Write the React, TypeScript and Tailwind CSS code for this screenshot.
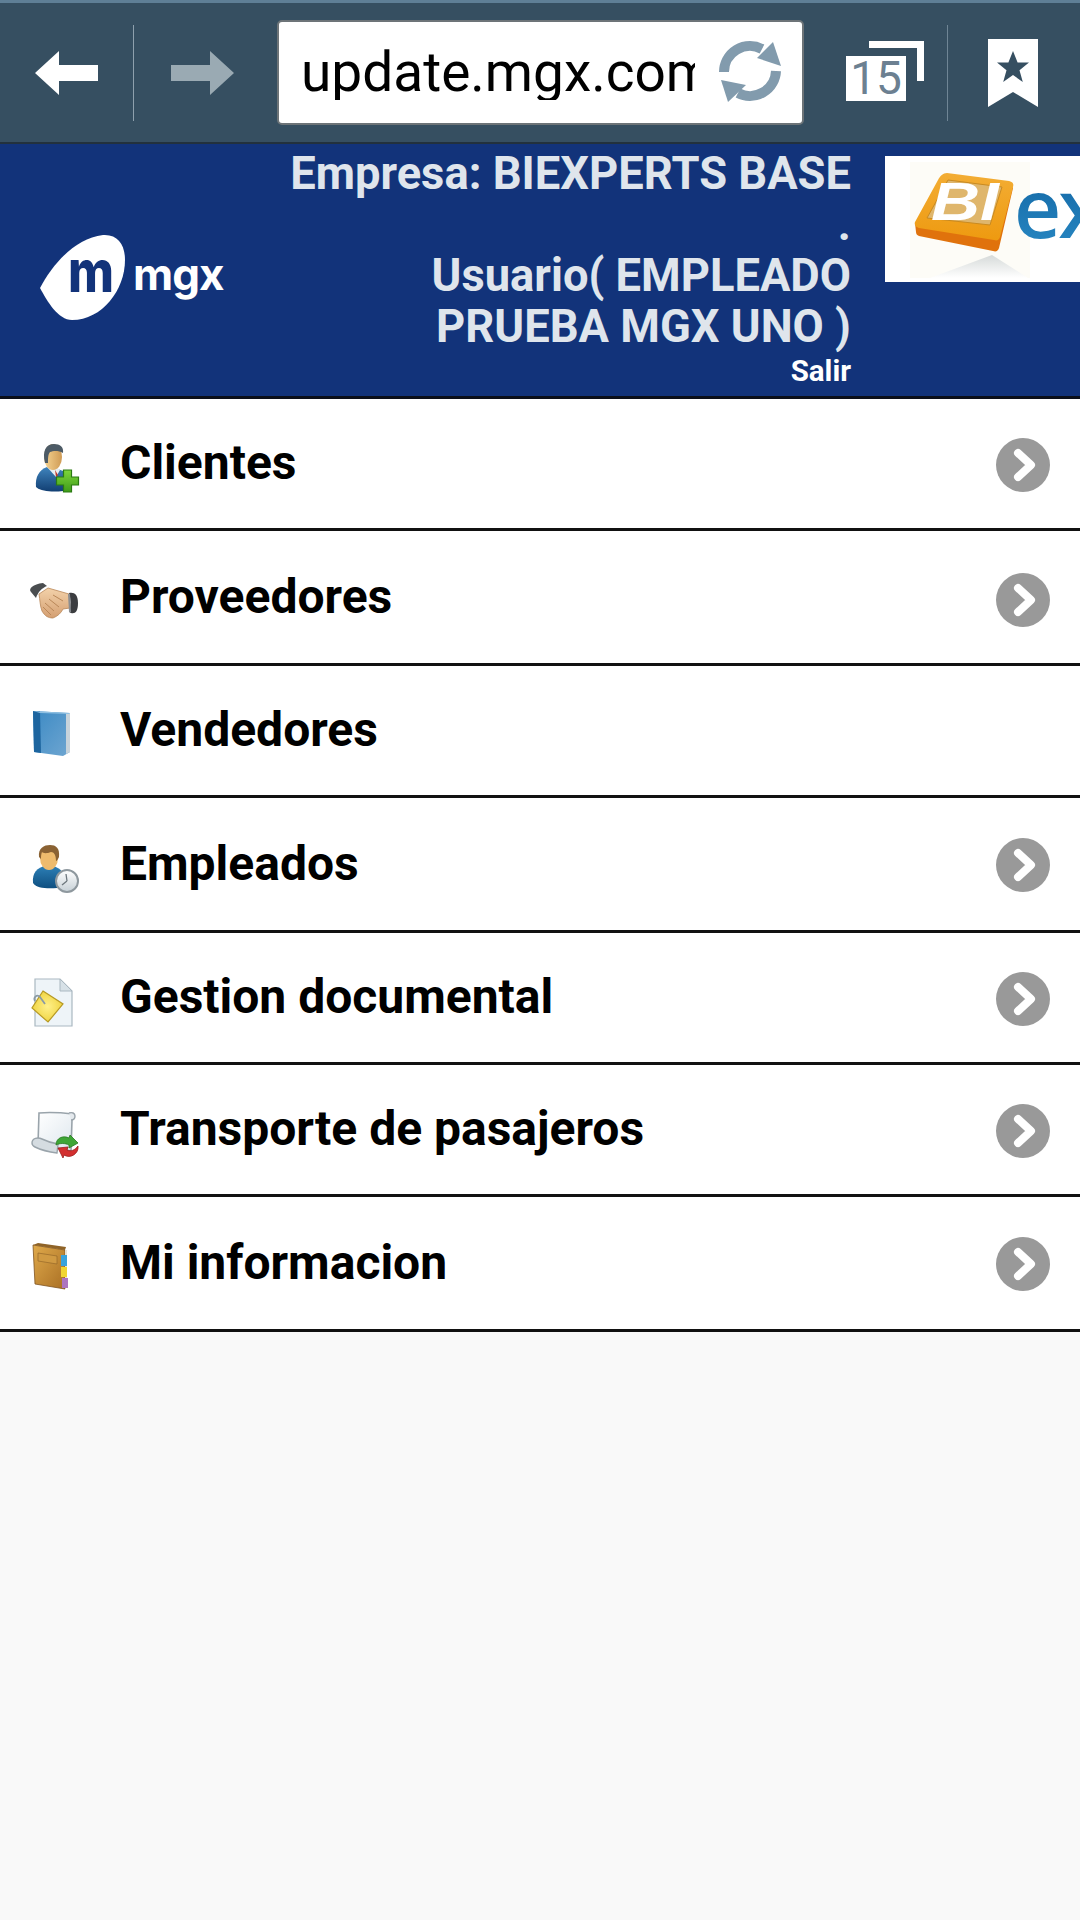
import type { ReactNode } from "react";

const font = { roboto: "font-['Roboto',sans-serif]" };

function ClientIcon() {
  return (
    <svg viewBox="0 0 50 50" className="h-[50px] w-[50px] overflow-visible">
      <defs>
        <linearGradient id="cl-suit" x1="0" y1="0" x2="0" y2="1">
          <stop offset="0" stopColor="#3f84bd" />
          <stop offset="1" stopColor="#123f73" />
        </linearGradient>
        <linearGradient id="cl-face" x1="0" y1="0" x2="1" y2="0">
          <stop offset="0" stopColor="#f6d492" />
          <stop offset="1" stopColor="#cf9b55" />
        </linearGradient>
        <linearGradient id="cl-plus" x1="0" y1="0" x2="0" y2="1">
          <stop offset="0" stopColor="#7ed63a" />
          <stop offset="1" stopColor="#3f9c1a" />
        </linearGradient>
      </defs>
      <path d="M6 48c-1-10 3-17 11-20l8 1 8 3v20c-9 1-21 1-27-4z" fill="url(#cl-suit)" />
      <path d="M17 28l9 10 4-7-5-4z" fill="#e8eef2" />
      <path d="M25 31l3 5-2 2z" fill="#c0392b" />
      <ellipse cx="23" cy="18" rx="9" ry="13" fill="url(#cl-face)" />
      <path d="M15 24c-3-12 1-19 9-19 6 0 10 3 9 9-5-3-10-2-13-1-2 2-2 7-2 11z" fill="#4d5b66" />
      <path d="M33.5 31h8v7h7v8h-7v7h-8v-7h-7v-8h7z" fill="url(#cl-plus)" stroke="#2a7a12" strokeWidth="1.2" />
    </svg>
  );
}

function HandshakeIcon() {
  return (
    <svg viewBox="0 0 50 50" className="h-[50px] w-[50px] overflow-visible">
      <defs>
        <linearGradient id="hs-skin" x1="0" y1="0" x2="0" y2="1">
          <stop offset="0" stopColor="#f3d2aa" />
          <stop offset="1" stopColor="#d49f72" />
        </linearGradient>
      </defs>
      <path d="M9 22l9-6 14 4 7 2 1 14-7 1c-2 4-5 7-10 9-5 0-8-2-11-7-2-5-2-11-3-17z" fill="url(#hs-skin)" stroke="#b98758" strokeWidth="0.8" />
      <path d="M15 31l9 8M13 35l8 8M19 27l10 8M23 23l10 6" stroke="#b98758" strokeWidth="1" fill="none" />
      <path d="M1 20c-3-3 2-8 12-9l4 3C12 16 8 20 6 26z" fill="#4a4d50" />
      <path d="M39 21c5-1 9 1 9 10s-3 11-7 10l-2-1c2-6 2-13 0-19z" fill="#3b3d40" />
      <path d="M38 22h2l1 18h-2z" fill="#8a8d90" />
    </svg>
  );
}

function BlueBookIcon() {
  return (
    <svg viewBox="0 0 50 50" className="h-[50px] w-[50px] overflow-visible">
      <defs>
        <linearGradient id="bb-cover" x1="0" y1="0" x2="1" y2="1">
          <stop offset="0" stopColor="#3c8ac4" />
          <stop offset="1" stopColor="#6fa6d1" />
        </linearGradient>
      </defs>
      <path d="M3 5l37 2v39l-7 4-29-4z" fill="url(#bb-cover)" />
      <path d="M3 5h7l1 42-7-1z" fill="#1d659f" />
      <path d="M36 7h4v39l-4 2z" fill="#c7d3db" />
      <path d="M3 5l37 2-1 1-29-1z" fill="#8fc0e2" />
    </svg>
  );
}

function EmployeeIcon() {
  return (
    <svg viewBox="0 0 50 50" className="h-[50px] w-[50px] overflow-visible">
      <defs>
        <linearGradient id="em-shirt" x1="0" y1="0" x2="0" y2="1">
          <stop offset="0" stopColor="#2c7fb6" />
          <stop offset="1" stopColor="#0f4f80" />
        </linearGradient>
        <linearGradient id="em-clock" x1="0" y1="0" x2="0" y2="1">
          <stop offset="0" stopColor="#ffffff" />
          <stop offset="1" stopColor="#c6d0d6" />
        </linearGradient>
      </defs>
      <path d="M3 44c-1-10 4-16 13-17h7c8 2 12 8 12 15l-8 7c-10 1-21 0-24-5z" fill="url(#em-shirt)" />
      <ellipse cx="19" cy="19" rx="9" ry="12" fill="#eebb6d" />
      <path d="M9 18c-1-9 5-12 11-12 6 0 10 3 9 12-1 2-2 4-3 4 0-6-2-9-5-9-5 2-8 1-9 0-1 2-1 5-1 7z" fill="#8a6233" />
      <circle cx="37" cy="42" r="11" fill="url(#em-clock)" stroke="#8e989e" strokeWidth="2" />
      <path d="M37 42l-1-7M37 42l-5 4" stroke="#6d777d" strokeWidth="1.3" fill="none" />
    </svg>
  );
}

function DocumentIcon() {
  return (
    <svg viewBox="0 0 50 50" className="h-[50px] w-[50px] overflow-visible">
      <defs>
        <radialGradient id="dc-note">
          <stop offset="0" stopColor="#fff08a" />
          <stop offset="1" stopColor="#f0d544" />
        </radialGradient>
      </defs>
      <path d="M5 6h25l12 12v35H5z" fill="#eef4f8" stroke="#aab8c1" strokeWidth="1.2" />
      <path d="M30 6v12h12z" fill="#d7e1e7" stroke="#aab8c1" strokeWidth="1" />
      <path d="M13 18l20 13-15 18-16-14z" fill="url(#dc-note)" stroke="#b79a24" strokeWidth="1.2" />
      <path d="M5 28c-2-4 2-7 5-4l5 7" stroke="#8a9aa5" strokeWidth="1.8" fill="none" />
    </svg>
  );
}

function ScrollIcon() {
  return (
    <svg viewBox="0 0 50 50" className="h-[50px] w-[50px] overflow-visible">
      <defs>
        <linearGradient id="sc-paper" x1="0" y1="0" x2="1" y2="1">
          <stop offset="0" stopColor="#ffffff" />
          <stop offset="1" stopColor="#dde6ed" />
        </linearGradient>
      </defs>
      <path d="M9 8c11-1 25 0 34 1l1 4-2 2-1 31-33-7z" fill="url(#sc-paper)" stroke="#9aa4ab" strokeWidth="1.6" />
      <path d="M39 8c3-1 6 0 6 3s-2 4-4 4" fill="#e4e9ed" stroke="#9aa4ab" strokeWidth="1.4" />
      <path d="M2 38c0-5 6-6 10-4 4 2 10 4 16 5l-1 9c-8-1-16-3-22-6-2-1-3-2-3-4z" fill="#d5dce1" stroke="#9aa4ab" strokeWidth="1.4" />
      <path d="M26 40c0-7 7-10 13-7l1-3 8 8-9 5v-3c-4-2-9-2-13 0z" fill="#3fa636" stroke="#277a20" strokeWidth="0.8" />
      <path d="M48 41c1 8-8 13-14 9l-1 3-5-10 10-1-1 3c4 2 8 0 11-4z" fill="#d32f2f" stroke="#9c1c1c" strokeWidth="0.8" />
    </svg>
  );
}

function AddressBookIcon() {
  return (
    <svg viewBox="0 0 50 50" className="h-[50px] w-[50px] overflow-visible">
      <defs>
        <linearGradient id="ab-cover" x1="0" y1="0" x2="1" y2="1">
          <stop offset="0" stopColor="#e0aa4b" />
          <stop offset="1" stopColor="#a96f24" />
        </linearGradient>
      </defs>
      <path d="M3 7l32 5v39L5 46z" fill="url(#ab-cover)" stroke="#7f5320" strokeWidth="0.8" />
      <path d="M3 7l5-2 28 4-1 3z" fill="#8f6327" />
      <path d="M8 15l19 3v8l-19-3z" fill="#d09a42" stroke="#96692a" strokeWidth="0.7" />
      <path d="M35 12h2v37l-2 2z" fill="#e9e2d2" />
      <rect x="31" y="17" width="6" height="11" fill="#39a3dc" />
      <rect x="31" y="29" width="6" height="10" fill="#f1d530" />
      <rect x="32" y="40" width="6" height="10" fill="#ad74c0" />
    </svg>
  );
}

function Chevron() {
  return (
    <svg viewBox="0 0 54 54" className="h-[54px] w-[54px]">
      <circle cx="27" cy="27" r="27" fill="#999999" />
      <path d="M22 15l13 12-13 12" fill="none" stroke="#ffffff" strokeWidth="8" strokeLinejoin="round" strokeLinecap="round" />
    </svg>
  );
}

const rows: { label: string; height: string; icon: ReactNode; chevron: string | null }[] = [
  { label: "Clientes", height: "h-[132px]", icon: <ClientIcon />, chevron: "pt-[2px]" },
  { label: "Proveedores", height: "h-[135px]", icon: <HandshakeIcon />, chevron: "pt-[6px]" },
  { label: "Vendedores", height: "h-[132px]", icon: <BlueBookIcon />, chevron: null },
  { label: "Empleados", height: "h-[135px]", icon: <EmployeeIcon />, chevron: "pt-[2px]" },
  { label: "Gestion documental", height: "h-[132px]", icon: <DocumentIcon />, chevron: "pt-[2px]" },
  { label: "Transporte de pasajeros", height: "h-[132px]", icon: <ScrollIcon />, chevron: "pt-[2px]" },
  { label: "Mi informacion", height: "h-[135px]", icon: <AddressBookIcon />, chevron: "pt-[2px]" },
];

function Toolbar() {
  return (
    <div className="flex h-[144px] items-center border-t-[3px] border-b-2 border-t-[#5f7f96] border-b-[#22313d] bg-[#364f61]">
      {/* Back / forward */}
      <div className="flex w-[133px] justify-center">
        <svg viewBox="0 0 64 44" className="h-[44px] w-[64px]">
          <path d="M0 22L24 0v14h39v16H24v14z" fill="#ffffff" />
        </svg>
      </div>
      <div className="h-[96px] w-px bg-[#8ea0ad]" />
      <div className="flex w-[143px] justify-center">
        <svg viewBox="0 0 64 44" className="mr-[8px] h-[44px] w-[64px]">
          <path d="M64 22L40 0v14H1v16h39v14z" fill="#9aaab3" />
        </svg>
      </div>

      {/* Address bar */}
      <div className="flex h-[105px] w-[527px] shrink-0 items-center overflow-hidden rounded-[5px] border-2 border-[#6d7478] bg-white pl-[22px]">
        <div className={`w-[394px] shrink-0 overflow-hidden whitespace-nowrap text-[55px] leading-none text-black ${font.roboto}`}>
          update.mgx.com
        </div>
        <svg viewBox="0 0 70 70" className="-mt-[5px] ml-[20px] h-[70px] w-[70px] shrink-0">
          <path d="M9 37A26 26 0 0 1 47 14" fill="none" stroke="#829bad" strokeWidth="10" />
          <path d="M58 7l8 24-24-8z" fill="#829bad" />
          <path d="M61 36A26 26 0 0 1 23 58" fill="none" stroke="#829bad" strokeWidth="10" />
          <path d="M6 45l25 5-18 17z" fill="#829bad" />
        </svg>
      </div>

      {/* Tabs */}
      <div className="ml-[42px] w-[78px] shrink-0">
        <div className="relative -mt-[4px] h-[60px] w-[78px]">
          <div className="absolute right-0 top-0 h-[40px] w-[55px] border-r-[7px] border-t-[7px] border-white" />
          <div className={`absolute bottom-0 left-0 flex h-[45px] w-[60px] items-center justify-center bg-white text-[46px] leading-none text-[#6c8091] ${font.roboto}`}>
            15
          </div>
        </div>
      </div>

      <div className="ml-[23px] h-[96px] w-px bg-[#6f8595]" />

      {/* Bookmark */}
      <div className="ml-[40px]">
        <svg viewBox="0 0 50 68" className="h-[68px] w-[50px]">
          <path d="M0 0h50v68L25 53 0 68z" fill="#ffffff" />
          <path d="M25 12l4.6 11.5H41l-9.5 7.8 3.3 11.7L25 36l-9.8 7 3.3-11.7L9 23.5h11.4z" fill="#364f61" />
        </svg>
      </div>
    </div>
  );
}

function MgxLogo() {
  return (
    <div className="flex items-center pl-[40px] pt-[15px]">
      <svg viewBox="0 0 85 85" className="h-[85px] w-[85px] shrink-0 overflow-visible">
        <path d="M0 53C12 30 35 3 63 0c15-1 22 10 22 25 0 30-23 60-53 60C18 85 7 66 0 53z" fill="#ffffff" />
        <text x="28" y="57" fontFamily="Inter, sans-serif" fontWeight="800" fontSize="58" textLength="46" lengthAdjust="spacingAndGlyphs" textAnchor="start" fill="#12337a">
          m
        </text>
      </svg>
      <span className="ml-[8px] -mt-[7px] font-['Inter',sans-serif] text-[44px] font-bold leading-none tracking-[-1px] text-white">
        mgx
      </span>
    </div>
  );
}

function BiLogo() {
  return (
    <div className="ml-[34px] mt-[12px] h-[126px] w-[195px] overflow-hidden bg-white">
      <svg viewBox="0 0 195 126" className="h-[126px] w-[195px]">
        <defs>
          <linearGradient id="bi-frame" x1="0" y1="0" x2="0" y2="1">
            <stop offset="0" stopColor="#f3ad34" />
            <stop offset="1" stopColor="#ee9a10" />
          </linearGradient>
          <linearGradient id="bi-shadow" x1="0" y1="0" x2="0" y2="1">
            <stop offset="0" stopColor="#d6dad9" />
            <stop offset="1" stopColor="#ffffff" />
          </linearGradient>
          <linearGradient id="bi-ex" x1="0" y1="0" x2="0" y2="1">
            <stop offset="0" stopColor="#0f5f9e" />
            <stop offset="1" stopColor="#2a8cc6" />
          </linearGradient>
        </defs>
        <rect x="25" y="6" width="120" height="116" fill="#fdfcf7" />
        <path d="M107 99l36 23H45z" fill="url(#bi-shadow)" />
        <path d="M30 67l1 9c0 2 1 3 3 4l74 15c3 1 5 0 6-3l14-60-4-6z" fill="#e0720c" />
        <path d="M62 17l62 8c4 1 5 3 4 6l-13 50c-1 3-3 4-6 3L34 72c-3-1-5-3-4-6l23-42c2-4 5-7 9-7z" fill="url(#bi-frame)" />
        <path d="M63 24l54 7-12 38-63-7z" fill="#dfb66c" stroke="#c98a20" strokeWidth="1" />
        <text x="46" y="64" fontFamily="Liberation Sans, sans-serif" fontStyle="italic" fontWeight="700" fontSize="54" textLength="68" lengthAdjust="spacingAndGlyphs" fill="#ffffff">
          BI
        </text>
        <text x="129" y="82" fontFamily="Open Sans, sans-serif" fontWeight="600" fontSize="82" letterSpacing="-3" fill="url(#bi-ex)">
          ex
        </text>
      </svg>
    </div>
  );
}

function Header() {
  return (
    <div className="flex h-[255px] items-start overflow-hidden border-b-[3px] border-[#0b0f1a] bg-[#12337a]">
      <div className="flex h-full w-[281px] shrink-0 items-center">
        <MgxLogo />
      </div>
      <div className={`w-[570px] shrink-0 pt-[4px] text-right ${font.roboto}`}>
        <div className="text-[45.3px] font-bold leading-[51px] text-[#dfe5ec]">
          Empresa: BIEXPERTS BASE .
          <br />
          Usuario( EMPLEADO PRUEBA MGX UNO )
        </div>
        <div className="mt-[4px] text-[29.5px] font-bold leading-[30px] text-white">Salir</div>
      </div>
      <BiLogo />
    </div>
  );
}

export default function App() {
  return (
    <div className="min-h-[1920px] w-[1080px] overflow-hidden bg-[#f9f9f9]">
      <Toolbar />
      <Header />
      <div>
        {rows.map((row) => (
          <div
            key={row.label}
            className={`flex items-center border-b-[3px] border-[#111111] bg-white pl-[30px] pr-[30px] ${row.height}`}
          >
            <div className="shrink-0">{row.icon}</div>
            <div className={`-mt-[1px] ml-[40px] flex-1 text-[48px] font-bold leading-none text-black ${font.roboto}`}>
              {row.label}
            </div>
            {row.chevron && (
              <div className={`shrink-0 ${row.chevron}`}>
                <Chevron />
              </div>
            )}
          </div>
        ))}
      </div>
    </div>
  );
}
